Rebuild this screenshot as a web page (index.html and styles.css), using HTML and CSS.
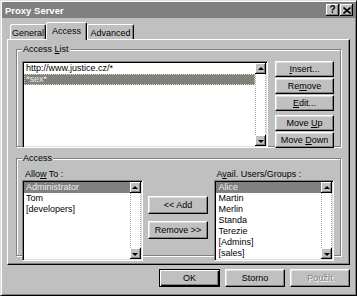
FILE: index.html
```html
<!DOCTYPE html>
<html lang="cs">
<head>
  <meta charset="UTF-8" />
  <title>Proxy Server</title>
  <link rel="stylesheet" href="styles.css">
</head>
<body>
  <div class="window">
    <div class="titlebar">
      <span class="title">Proxy Server</span>
      <div class="caption-buttons">
        <span class="cap-btn help">?</span>
        <span class="cap-btn close">
          <svg width="8" height="7" viewBox="0 0 8 7"><path d="M0.5 0.5 L7.5 6.5 M7.5 0.5 L0.5 6.5" stroke="#000" stroke-width="1.6" fill="none"/></svg>
        </span>
      </div>
    </div>

    <div class="dialog">
      <div class="tabs">
        <div class="tab tab-general">General</div>
        <div class="tab tab-access active">Access</div>
        <div class="tab tab-advanced">Advanced</div>
      </div>

      <div class="panel">
        <div class="group">
          <div class="group-title">Access <u>L</u>ist</div>
          <div class="group-row list-row">
            <div class="listbox list-urls">
              <div class="items">
                <div class="item">http://www.justice.cz/*</div>
                <div class="item selected focused">*sex*</div>
              </div>
              <div class="scrollbar">
                <div class="sb-btn"><span class="arrow up"></span></div>
                <div class="sb-track"></div>
                <div class="sb-btn"><span class="arrow down"></span></div>
              </div>
            </div>
            <div class="btn-col">
              <div class="btn"><span><u>I</u>nsert...</span></div>
              <div class="btn"><span>Re<u>m</u>ove</span></div>
              <div class="btn"><span><u>E</u>dit...</span></div>
              <div class="btn btn-gap"><span>Move <u>U</u>p</span></div>
              <div class="btn"><span>Move <u>D</u>own</span></div>
            </div>
          </div>
        </div>

        <div class="group group-access">
          <div class="group-title">Access</div>
          <div class="group-row">
            <div class="pick-col">
              <div class="field-label">Allo<u>w</u> To :</div>
              <div class="listbox list-users">
                <div class="items">
                  <div class="item selected">Administrator</div>
                  <div class="item">Tom</div>
                  <div class="item">[developers]</div>
                </div>
                <div class="scrollbar">
                  <div class="sb-btn"><span class="arrow up"></span></div>
                  <div class="sb-track"></div>
                  <div class="sb-btn"><span class="arrow down"></span></div>
                </div>
              </div>
            </div>

            <div class="move-col">
              <div class="btn btn-add"><span>&lt;&lt; Add</span></div>
              <div class="btn btn-remove"><span>Remove &gt;&gt;</span></div>
            </div>

            <div class="pick-col pick-avail">
              <div class="field-label">A<u>v</u>ail. Users/Groups :</div>
              <div class="listbox list-users">
                <div class="items">
                  <div class="item selected">Alice</div>
                  <div class="item">Martin</div>
                  <div class="item">Merlin</div>
                  <div class="item">Standa</div>
                  <div class="item">Terezie</div>
                  <div class="item">[Admins]</div>
                  <div class="item">[sales]</div>
                </div>
                <div class="scrollbar">
                  <div class="sb-btn"><span class="arrow up"></span></div>
                  <div class="sb-track"></div>
                  <div class="sb-btn"><span class="arrow down"></span></div>
                </div>
              </div>
            </div>
          </div>
        </div>
      </div>

      <div class="footer">
        <div class="btn default"><span>OK</span></div>
        <div class="btn"><span>Storno</span></div>
        <div class="btn disabled"><span>Použít</span></div>
      </div>
    </div>
  </div>
</body>
</html>
```

FILE: styles.css
```css
body {
  margin: 0;
  font-family: 'Liberation Sans', Arial, sans-serif;
  font-size: 9px;
  color: #000;
  background: #c0c0c0;
}
.window {
  width: 357px;
  height: 296px;
  box-sizing: border-box;
  padding: 1px;
  background: #c0c0c0;
  border: 1px solid;
  border-color: #dfdfdf #000 #000 #dfdfdf;
  box-shadow: inset 1px 1px #fff, inset -1px -1px #808080;
}
.titlebar {
  height: 16px;
  background: #808080;
  display: flex;
  align-items: center;
  justify-content: space-between;
  padding: 0 2px 0 3px;
}
.title {
  color: #fff;
  font-weight: bold;
  font-size: 9.5px;
}
.caption-buttons {
  display: flex;
  gap: 1px;
}
.cap-btn {
  width: 13px;
  height: 12px;
  box-sizing: border-box;
  background: #c0c0c0;
  box-shadow: inset -1px -1px #000, inset 1px 1px #fff, inset -2px -2px #808080;
  display: flex;
  align-items: center;
  justify-content: center;
  font-weight: bold;
  font-size: 10px;
  line-height: 12px;
}
.dialog {
  padding: 4px 5px 0;
}
.tabs {
  display: flex;
  align-items: flex-end;
  height: 17px;
  padding-left: 3px;
}
.tab {
  position: relative;
  height: 15px;
  box-sizing: border-box;
  border: 1px solid;
  border-bottom: none;
  border-color: #fff #000 #000 #fff;
  border-radius: 2px 2px 0 0;
  box-shadow: inset -1px 0 #808080;
  display: flex;
  align-items: center;
  justify-content: center;
  padding-top: 1px;
}
.tab-general { width: 36px; }
.tab-access { width: 41px; }
.tab-advanced { width: 47px; }
.tab.active {
  height: 18px;
  margin-bottom: -1px;
  background: #c0c0c0;
  z-index: 1;
  padding-bottom: 2px;
}
.panel {
  height: 226px;
  box-sizing: border-box;
  border: 1px solid;
  border-color: #fff #000 #000 #fff;
  box-shadow: inset -1px -1px #808080;
  padding: 9px 8px 8px;
}
.group {
  height: 98px;
  box-sizing: border-box;
  border: 1px solid #808080;
  box-shadow: inset 1px 1px #fff, 1px 1px #fff;
  padding: 0 6px 4px 5px;
}
.group-access {
  margin-top: 11px;
  padding-bottom: 0;
}
.group-title {
  display: inline-block;
  margin: -6px 0 0 0;
  padding: 0 1px;
  height: 10px;
  line-height: 10px;
  background: #c0c0c0;
  vertical-align: top;
}
.group-row {
  display: flex;
}
.list-row {
  margin-top: 1px;
  gap: 7px;
}
.listbox {
  display: flex;
  box-sizing: border-box;
  background: #fff;
  border: 1px solid;
  border-color: #808080 #fff #fff #808080;
  box-shadow: inset 1px 1px #000, inset -1px -1px #dfdfdf;
  padding: 1px;
}
.list-urls {
  width: 246px;
  height: 87px;
}
.items {
  flex: 1;
  min-width: 0;
}
.item {
  line-height: 11px;
  height: 11px;
  padding: 0 2px;
  white-space: nowrap;
}
.item.selected {
  background: #808080;
  color: #f0f0f0;
}
.item.focused {
  outline: 1px dotted #d8d890;
  outline-offset: -1px;
}
.scrollbar {
  width: 11px;
  display: flex;
  flex-direction: column;
}
.sb-btn {
  height: 11px;
  background: #c0c0c0;
  box-shadow: inset -1px -1px #000, inset 1px 1px #fff, inset -2px -2px #808080;
  display: flex;
  align-items: center;
  justify-content: center;
}
.sb-track {
  flex: 1;
  background: #fff;
  border-left: 1px dotted #a8a8a8;
  border-right: 1px dotted #a8a8a8;
}
.arrow {
  width: 0;
  height: 0;
  border-left: 3px solid transparent;
  border-right: 3px solid transparent;
}
.arrow.up { border-bottom: 3px solid #000; margin-bottom: 1px; }
.arrow.down { border-top: 3px solid #000; margin-top: 1px; }
.btn-col {
  width: 59px;
  display: flex;
  flex-direction: column;
  gap: 1px;
}
.btn {
  height: 16px;
  box-sizing: border-box;
  background: #c0c0c0;
  border: 1px solid;
  border-color: #fff #000 #000 #fff;
  box-shadow: inset -1px -1px #808080, inset 1px 1px #dfdfdf;
  display: flex;
  align-items: center;
  justify-content: center;
  white-space: nowrap;
}
.btn-gap {
  margin-top: 3px;
}
.pick-col {
  width: 121px;
}
.pick-avail {
  width: 120px;
  margin-left: 6px;
}
.field-label {
  height: 11px;
  line-height: 11px;
  padding-left: 3px;
}
.pick-avail .field-label {
  padding-left: 2px;
}
.list-users {
  height: 81px;
}
.move-col {
  width: 61px;
  margin-left: 5px;
  display: flex;
  flex-direction: column;
}
.btn-add {
  height: 18px;
  margin-top: 27px;
}
.btn-remove {
  height: 18px;
  margin-top: 7px;
}
.footer {
  display: flex;
  justify-content: flex-end;
  gap: 5px;
  margin-top: 4px;
}
.footer .btn {
  width: 60px;
  height: 18px;
}
.footer .btn.default {
  width: 61px;
  border-color: #000;
  box-shadow: inset 1px 1px #fff, inset -1px -1px #000, inset -2px -2px #808080;
}
.btn.disabled {
  color: #808080;
  text-shadow: 1px 1px #fff;
}
```
